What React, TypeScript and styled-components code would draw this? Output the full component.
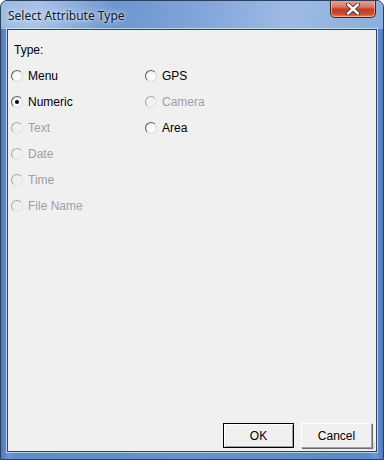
import styled, { createGlobalStyle } from "styled-components";

type Option = {
  label: string;
  checked?: boolean;
  disabled?: boolean;
};

const leftOptions: Option[] = [
  { label: "Menu" },
  { label: "Numeric", checked: true },
  { label: "Text", disabled: true },
  { label: "Date", disabled: true },
  { label: "Time", disabled: true },
  { label: "File Name", disabled: true },
];

const rightOptions: Option[] = [
  { label: "GPS" },
  { label: "Camera", disabled: true },
  { label: "Area" },
];

const RadioItem = ({ label, checked, disabled }: Option) => (
  <RadioRow>
    <Circle $disabled={disabled}>{checked && <Dot />}</Circle>
    <RadioLabel $disabled={disabled}>{label}</RadioLabel>
  </RadioRow>
);

const App = () => {
  return (
    <>
      <GlobalStyle />
      <Window>
        <TitleBar>
          <Title>Select Attribute Type</Title>
          <CloseButton>
            <svg width="18" height="12" viewBox="0 0 18 12">
              <path
                d="M4 1.5 L14 10.5 M14 1.5 L4 10.5"
                stroke="#4a2a28"
                strokeWidth="4.2"
                strokeLinecap="round"
              />
              <path
                d="M4 1.5 L14 10.5 M14 1.5 L4 10.5"
                stroke="#ffffff"
                strokeWidth="2.4"
                strokeLinecap="round"
              />
            </svg>
          </CloseButton>
        </TitleBar>
        <Client>
          <TypeLabel>Type:</TypeLabel>
          <Columns>
            <Column>
              {leftOptions.map((o) => (
                <RadioItem key={o.label} {...o} />
              ))}
            </Column>
            <Column>
              {rightOptions.map((o) => (
                <RadioItem key={o.label} {...o} />
              ))}
            </Column>
          </Columns>
          <Footer>
            <Button $default>OK</Button>
            <Button>Cancel</Button>
          </Footer>
          <Grip width="10" height="10" viewBox="0 0 10 10">
            <path
              d="M9 2 L2 9 M9 5 L5 9 M9 8 L8 9"
              stroke="#9a9a9a"
              strokeWidth="1"
              strokeDasharray="1 1"
            />
          </Grip>
        </Client>
      </Window>
    </>
  );
};

export default App;

const GlobalStyle = createGlobalStyle`
  body {
    margin: 0;
    background: #ffffff;
  }
`;

const Window = styled.div`
  width: 384px;
  height: 460px;
  box-sizing: border-box;
  display: flex;
  flex-direction: column;
  border: 1px solid #2c3f5c;
  border-radius: 7px 7px 0 0;
  background: linear-gradient(
    90deg,
    #4d78bd 0%,
    #6e95d0 2%,
    #5f8acb 4%,
    #6990cf 50%,
    #5d87c9 96%,
    #6f96d2 98%,
    #4e79be 100%
  );
  overflow: hidden;
  position: relative;
`;

const TitleBar = styled.div`
  height: 28px;
  display: flex;
  align-items: flex-start;
  justify-content: space-between;
  padding-left: 7px;
  padding-right: 7px;
  background: linear-gradient(
    100deg,
    #9cb9e2 0%,
    #a9c3e8 10%,
    #6d95d0 30%,
    #85a7db 55%,
    #9dbbe4 75%,
    #8aaede 100%
  );
`;

const Title = styled.span`
  font-family: "Noto Sans", sans-serif;
  font-size: 12px;
  color: #0e1b2b;
  margin-top: 6px;
  text-shadow: 0 0 8px rgba(255, 255, 255, 0.9), 0 0 3px rgba(255, 255, 255, 0.8);
`;

const CloseButton = styled.div`
  width: 46px;
  height: 18px;
  margin-top: -1px;
  box-sizing: border-box;
  display: flex;
  align-items: center;
  justify-content: center;
  border: 1px solid #4b2420;
  border-top: none;
  border-radius: 0 0 5px 5px;
  background: linear-gradient(
    180deg,
    #e8a89a 0%,
    #d77a66 40%,
    #c23f26 55%,
    #c9492e 80%,
    #e07e5c 100%
  );
  box-shadow: inset 0 0 0 1px rgba(255, 220, 210, 0.5);
`;

const Client = styled.div`
  flex: 1;
  margin: 0 6px 7px 6px;
  display: flex;
  flex-direction: column;
  background: #f0f0f0;
  border: 1px solid #2e4566;
  box-shadow: 0 0 0 1px rgba(220, 232, 248, 0.7);
  font-family: "Liberation Sans", Arial, sans-serif;
  font-size: 12px;
  position: relative;
`;

const TypeLabel = styled.div`
  margin: 13px 0 0 6px;
  line-height: 14px;
  color: #000000;
`;

const Columns = styled.div`
  margin-top: 6px;
  display: grid;
  grid-template-columns: 134px 1fr;
  padding-left: 3px;
`;

const Column = styled.div`
  display: flex;
  flex-direction: column;
`;

const RadioRow = styled.div`
  height: 26px;
  display: flex;
  align-items: center;
  gap: 5px;
`;

const Circle = styled.span<{ $disabled?: boolean }>`
  width: 12px;
  height: 12px;
  box-sizing: border-box;
  border-radius: 50%;
  border: 1px solid;
  border-color: ${(p) =>
    p.$disabled
      ? "#a6a6a6 #e2e2e2 #e2e2e2 #a6a6a6"
      : "#5c5c5c #dcdcdc #dcdcdc #5c5c5c"};
  background: ${(p) =>
    p.$disabled
      ? "#f0f0f0"
      : "radial-gradient(circle at 60% 60%, #ffffff 0%, #f4f4f4 60%, #d8d8d8 100%)"};
  display: flex;
  align-items: center;
  justify-content: center;
`;

const Dot = styled.span`
  width: 4px;
  height: 4px;
  border-radius: 50%;
  background: #000000;
`;

const RadioLabel = styled.span<{ $disabled?: boolean }>`
  color: ${(p) => (p.$disabled ? "#a0a0a0" : "#000000")};
`;

const Footer = styled.div`
  margin-top: auto;
  display: flex;
  justify-content: flex-end;
  gap: 7px;
  padding: 0 4px 3px 0;
`;

const Button = styled.div<{ $default?: boolean }>`
  width: 71px;
  height: 25px;
  box-sizing: border-box;
  display: flex;
  align-items: center;
  justify-content: center;
  background: #f0f0f0;
  color: #000000;
  border: 1px solid;
  border-color: ${(p) =>
    p.$default ? "#000000" : "#ffffff #a0a0a0 #a0a0a0 #ffffff"};
  box-shadow: ${(p) =>
    p.$default
      ? "inset 1px 1px 0 #ffffff, inset -1px -1px 0 #a0a0a0"
      : "1px 1px 0 #696969"};
`;

const Grip = styled.svg`
  position: absolute;
  right: 0;
  bottom: 0;
`;
